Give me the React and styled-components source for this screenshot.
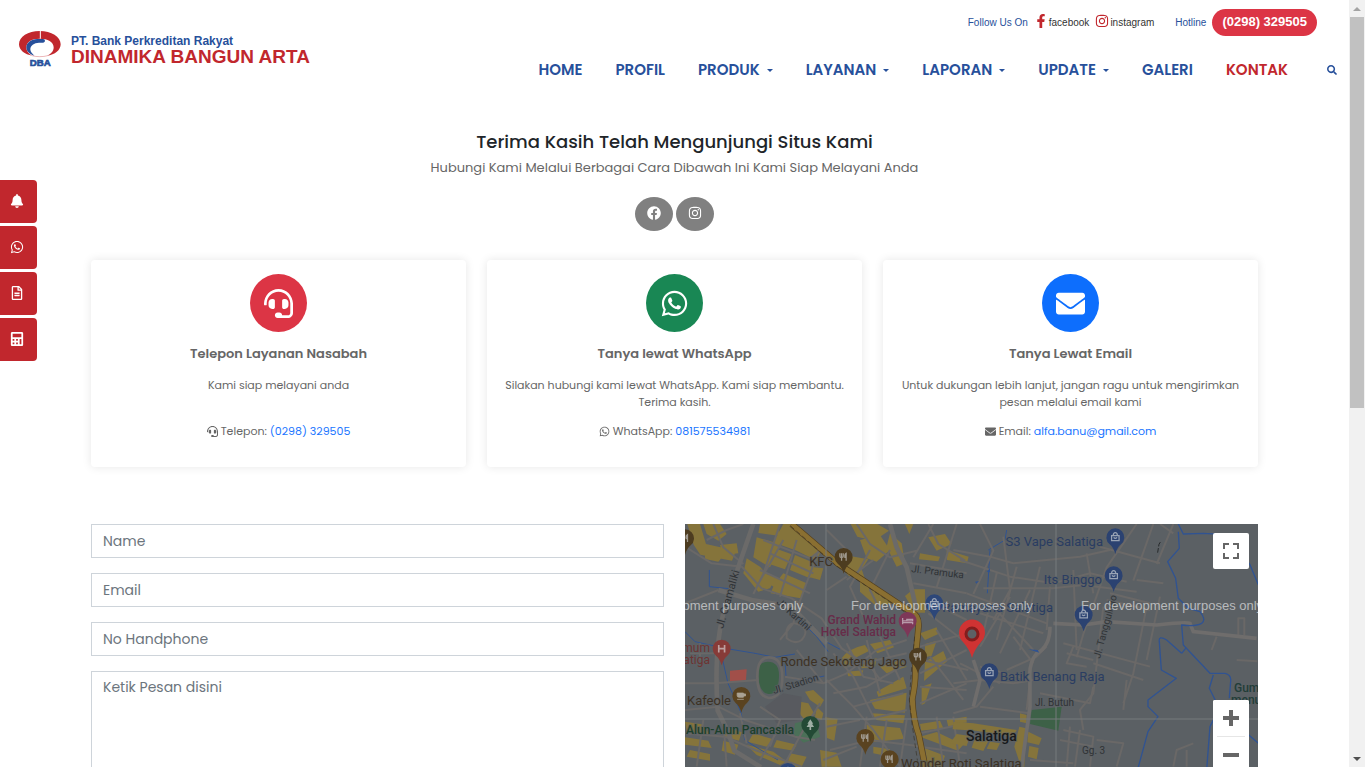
import React from "react";
import styled, { createGlobalStyle } from "styled-components";
import {
  FaBell,
  FaCalculator,
  FaEnvelope,
  FaFacebook,
  FaFacebookF,
  FaHeadset,
  FaInstagram,
  FaRegFileAlt,
  FaSearch,
  FaWhatsapp,
} from "react-icons/fa";

const GlobalStyle = createGlobalStyle`
  * { box-sizing: border-box; }
  body {
    margin: 0;
    background: #fff;
    color: #666;
    font-family: Poppins, Inter, "Open Sans", sans-serif;
    font-size: 11px;
  }
  a { text-decoration: none; color: inherit; }
  h1, h2, p { margin: 0; }
`;

const arial = `"Liberation Sans", Arial, sans-serif`;
const navy = "#27509b";
const red = "#c1272d";

const Shell = styled.div`
  display: flex;
  height: 100vh;
  overflow: hidden;
`;

const Page = styled.div`
  flex: 1;
  min-width: 0;
  overflow: hidden;
`;

const ScrollTrack = styled.div`
  display: flex;
  flex-direction: column;
  justify-content: space-between;
  align-items: center;
  width: 16px;
  background: #f1f1f1;
`;

const ScrollThumb = styled.div`
  flex: 0 0 51%;
  width: 14px;
  margin-bottom: auto;
  background: #c1c1c1;
`;

const ScrollArrow = styled.div`
  display: flex;
  align-items: center;
  justify-content: center;
  height: 17px;
  color: ${(p) => (p.$dark ? "#505050" : "#a3a3a3")};
`;

const Header = styled.header`
  display: flex;
  justify-content: space-between;
  padding: 9px 12px 0 18px;
  height: 100px;
`;

const Brand = styled.a`
  display: flex;
  align-items: flex-start;
  gap: 9px;
  padding-top: 21px;
`;

const BrandText = styled.span`
  display: flex;
  flex-direction: column;
  padding-top: 4px;
  font-family: ${arial};
  font-weight: bold;
`;

const BrandTop = styled.span`
  font-size: 12px;
  line-height: 14px;
  color: ${navy};
`;

const BrandName = styled.span`
  font-size: 19px;
  line-height: 18px;
  color: ${red};
`;

const HeaderRight = styled.div`
  display: flex;
  flex-direction: column;
`;

const TopBar = styled.div`
  display: flex;
  align-items: center;
  justify-content: flex-end;
  gap: 6px;
  padding-right: 20px;
  font: 10px ${arial};
  color: ${navy};
`;

const SocialLink = styled.a`
  display: flex;
  align-items: center;
  gap: 1px;
  color: #333;
  svg { color: ${red}; margin-top: -4px; }
`;

const HotlineLabel = styled.span`
  margin-left: 15px;
`;

const Pill = styled.a`
  padding: 0 10px 2px;
  border-radius: 14px;
  background: #dc3545;
  color: #fff;
  font: 700 13px/25px ${arial};
`;

const Nav = styled.nav`
  display: flex;
  align-items: center;
  gap: 33px;
  padding-top: 22px;
`;

const NavLink = styled.a`
  display: flex;
  align-items: center;
  gap: 7px;
  font-size: 15px;
  line-height: 24px;
  font-weight: 600;
  color: ${(p) => (p.$active ? red : navy)};
`;

const Caret = styled.span`
  border: 3px solid transparent;
  border-top-color: currentColor;
  border-bottom: 0;
`;

const SearchButton = styled.button`
  display: flex;
  margin-left: 6px;
  padding: 0;
  border: 0;
  background: none;
  color: ${navy};
`;

const Rail = styled.aside`
  position: fixed;
  left: 0;
  top: 180px;
  display: flex;
  flex-direction: column;
  gap: 3px;
`;

const RailLink = styled.a`
  display: flex;
  align-items: center;
  justify-content: center;
  width: 37px;
  height: 43px;
  padding: 0 3px 2px 0;
  border-radius: 0 4px 4px 0;
  background: ${red};
  color: #fff;
`;

const Container = styled.main`
  max-width: 1167px;
  margin: 0 auto;
`;

const Intro = styled.section`
  display: flex;
  flex-direction: column;
  align-items: center;
  padding-top: 30px;
  text-align: center;
`;

const Title = styled.h1`
  font-size: 18px;
  line-height: 24px;
  font-weight: 500;
  color: #212529;
`;

const Subtitle = styled.p`
  padding-top: 4px;
  font-size: 13px;
  line-height: 20px;
`;

const Socials = styled.div`
  display: flex;
  gap: 3px;
  padding: 19px 0 29px;
`;

const SocialButton = styled.a`
  display: flex;
  align-items: center;
  justify-content: center;
  height: 34px;
  padding: 0 12px 2px;
  border-radius: 50%;
  background: #808080;
  color: #fff;
`;

const Cards = styled.section`
  display: grid;
  grid-template-columns: repeat(3, 1fr);
  gap: 21px;
`;

const Card = styled.article`
  display: flex;
  flex-direction: column;
  align-items: center;
  min-height: 207px;
  padding: 14px 15px;
  border-radius: 4px;
  box-shadow: 0 0 10px rgba(0, 0, 0, 0.1);
  text-align: center;
  line-height: 17px;
`;

const CardIcon = styled.div`
  display: flex;
  align-items: center;
  justify-content: center;
  width: 57px;
  height: 58px;
  border-radius: 50%;
  background: ${(p) => p.$color};
  color: #fff;
`;

const CardTitle = styled.h2`
  padding: 12px 0 13px;
  font-size: 13px;
  line-height: 20px;
  font-weight: 600;
`;

const CardText = styled.p`
  min-height: 34px;
`;

const CardContact = styled.p`
  display: flex;
  align-items: center;
  gap: 3px;
  padding-top: 12px;
  a { color: #1a75ff; }
`;

const Columns = styled.section`
  display: grid;
  grid-template-columns: 1fr 1fr;
  gap: 21px;
  padding-top: 57px;
`;

const Form = styled.form`
  display: flex;
  flex-direction: column;
  gap: 15px;
`;

const Field = styled.input`
  width: 100%;
  height: 34px;
  padding: 0 11px;
  border: 1px solid #ced4da;
  border-radius: 0;
  background: #fff;
  font: 14px/22px Poppins, Inter, sans-serif;
  &::placeholder { color: #6c757d; opacity: 1; }
`;

const MessageField = styled(Field)`
  display: block;
  height: 140px;
  padding: 4px 11px;
  resize: none;
`;

const MapBox = styled.div`
  position: relative;
  height: 282px;
  overflow: hidden;
  background: #5b6064;
`;

const MapSvg = styled.svg`
  display: block;
  width: 100%;
  height: 100%;
`;

const MapButton = styled.button`
  display: flex;
  align-items: center;
  justify-content: center;
  width: 36px;
  height: 36px;
  padding: 0;
  border: 0;
  border-radius: 2px;
  background: #fff;
`;

const FullscreenSlot = styled.div`
  position: absolute;
  top: 9px;
  right: 9px;
`;

const ZoomSlot = styled.div`
  position: absolute;
  top: 176px;
  right: 9px;
  border-radius: 2px;
  background: #fff;
`;

const ZoomRule = styled.div`
  height: 1px;
  margin: 0 4px;
  background: #e6e6e6;
`;

function Logo() {
  return (
    <svg width="44" height="38" viewBox="0 0 132 114" aria-hidden="true">
      <path fillRule="evenodd" fill={red} d="M65 3C30 3 3 20 3 43c0 17 17 31 40 34-10-5-18-13-18-25 0-17 16-26 40-26s42 9 42 26c0 12-8 20-20 25 24-2 41-17 41-34C128 20 100 3 65 3z" />
      <path d="M67 0v26" stroke="#fff" strokeWidth="3" />
      <path fill={navy} d="M75 27H58c-18 0-33 11-33 25 0 11 9 21 24 25-7-6-12-12-12-19 0-12 11-19 26-20h12c8 0 8-11 0-11z" />
      <path d="M42 77c12 4 34 4 47 0" fill="none" stroke={red} strokeWidth="1" />
      <text x="67" y="109" textAnchor="middle" fontFamily="Liberation Sans, Arial, sans-serif" fontWeight="bold" fontSize="29" fill={navy} stroke={navy} strokeWidth="2">DBA</text>
    </svg>
  );
}

const glyphs = {
  food: <path d="M-9-9v7q0 3 4 3V9M-5-9v10M-1-9v7q0 3-4 3M6 9V-9q-4 2-3 10h3" fill="none" stroke="#a09a90" strokeWidth="3" />,
  bag: <path d="M-9-4H9V8H-9zM-5-4q0-7 5-7t5 7M-4 0q4 5 8 0" fill="none" stroke="#98a3b5" strokeWidth="3" />,
  bed: <path d="M-12-7V8M-12 4H12V8M-12 0H12V-4H-2V0" fill="none" stroke="#b89aaa" strokeWidth="3" />,
  cup: <path d="M-10-7H5V3H-6q-4 0-4-4zM5-5h5v5H5M-10 8H6" fill="#aaa293" stroke="#aaa293" strokeWidth="2" />,
  tree: <path d="M0-14-7-3h3l-5 8H-2v7h4V5h7L4-3h3z" fill="#9fb0a5" />,
  hosp: <path d="M-7-9V9M7-9V9M-7 0H7" stroke="#bda09f" strokeWidth="4" />,
};

function Pin({ x, y, color, kind }) {
  return (
    <g transform={`translate(${x} ${y})`}>
      <path d="M0 50Q-5 31-17 21A27 27 0 1 1 17 21Q5 31 0 50Z" fill={color} />
      <g transform="scale(1.25)">{glyphs[kind]}</g>
    </g>
  );
}

function CityMap() {
  return (
    <MapSvg viewBox="0 0 573 282" preserveAspectRatio="xMinYMin slice" role="img" aria-label="Peta Salatiga">
      <rect width="573" height="282" fill="#5b6064" />
      <g transform="translate(-5 -4) scale(0.3333)">
        <g fill="#85743b">
          <path d="M22 12h38l18 60 90 20-12 30-95-18-20-30zM70 12h50l20 30-25 20-35-20zM120 75l50-5 5 30-45 5zM75 105l50 8-10 12-40-8z" />
          <path d="M240 12h60l-5 35-60-8zM310 12h25l90 75-15 35-60-30-70-25zM230 52l70 20-30 70-50-30zM285 85l50 18-20 45-45-15zM345 105l60 25-15 45-60-25zM200 115l40 25 40 45-10 20-35 10-45-55zM255 160l50 20-10 30-30-20zM310 160l70 30-18 45-90-15 10-25zM390 140l40 5-10 35-30-8z" />
          <path d="M512 12h80l35 20-45 30-50-12zM540 60l60-15 30 45-40 35-30-10zM630 40l35 30 10 60-25 10-30-60zM470 130l40-22 55 10-20 30 12 35-50-15zM540 165l50 45 55 40-60 5-45-40zM700 208h35v70h-30l-30-50zM675 12h25l-12 30zM720 100l60 10-5 14-58-6zM745 52l50-10 20 30-45 20zM800 90l66 20-5 20-60-10z" />
          <path d="M485 415q20-30 70-40l12 18-60 30 10 15-25 5zM570 372l60-12 12 22-50 18zM500 455l50-4-5 16-40 2zM600 440l60-20 20 20-60 20zM540 425l50-10-5 25-40 5zM590 515l80-45 10 35-85 25zM570 540l110-22-5 60-90-12zM575 580l100 6-5 24-80-10zM720 340l50-18 5 20-40 18zM735 372l35-10-15 45-20 5zM735 425l55-32 12 30-70 60zM725 500l30-10-20 60-10 5z" />
          <path d="M560 614l100 10 12 32-90 10-20-20zM720 612l60-10 10 22-66 8zM800 600l60-10v18l-55 12zM720 650l50-14 80 38-16 18zM735 685l60 22-10 33h-40zM375 515l25-5 32 30-12 20-30-20zM360 545l25 5 20 35-35 10-15-20zM410 560l20 20-5 20-20-8zM435 592l38 5-10 65-22-8zM580 680l50 8-10 20-40-8z" />
          <path d="M15 605l50 8 25 30-70-8zM15 652l70 10 10 22-80-10zM30 690l60 12v20l-70-12zM140 622l45 15-8 25-45-12zM130 662l45 12-10 30-40-12zM220 640l60 18-20 22-55-14zM290 660l60 14-10 18-60-10zM200 675l80 20 40 30-20 10-70-30zM330 700l50 10-15 30h-45zM420 690l50 8 15 42h-60z" />
        </g>
        <path d="M310 520l55 10-5 70-70 10-35-50z" fill="#585a5f" />
        <path d="M150 452l50-4-2 34-48 3z" fill="#a14f49" />
        <path d="M235 455q0-28 28-30 36 0 34 45-2 55-32 52-32-5-30-67z" fill="#3d6147" />
        <path d="M345 610l60-15 16 55-50 18-30-25z" fill="#4b7058" />
        <g fill="none" stroke="#305392" strokeWidth="3">
          <path d="M15 335l30 30 90 20 90 15 60 12 60-10M350 290l60 60 35 45M130 400l-2 20 16 70 40 90 10 80 40 25 60 35M315 420l3 50 50 12 65-14M88 150v50l60 6M410 350l70 38" />
        </g>
        <g fill="none" stroke="#6a6867" strokeWidth="6" strokeLinejoin="round">
          <path d="M15 80l80 50 90 10 60 65 90 30 90 60 60 90 90 60 30 40M100 12l30 70 60 50M80 60l60-30 50-18M250 60l140 55 40-30M270 100l130 60M240 150l150 70M300 12l-50 150-30 60M350 60l-50 170M420 80l-70 190M230 200l80-140M15 250l100-40" />
          <path d="M440 30l60 60M530 12l40 60 60 40 80-20M570 90l-60 110 40 90M630 90l-60 120 30 60M500 180l80-60M440 210l60-40M745 12l30 60 80 50M690 130l170 30M760 12l-60 100M830 12l-60 190M700 190l160 30M740 240l120 60M745 280l115 90" />
          <path d="M15 490h90l130-10M315 470l115 20 70-30 90-70 90-30M460 400l60 70 60 120M500 370l50 100 90 20M560 360l40 160M600 350l60 130M500 440l180-40M460 520l100-20 120-70M520 560l150-40M560 600l120-30M440 480l80 80 60 70 80 110M720 380l140-40M725 420l140 30M720 460l140-70M720 500l140 10M720 550l140-60M770 330l90 150M750 410l100 130" />
          <path d="M15 570l100-10 80 40 150 50 60 10M15 640l120 10 90 40 140 50M70 600l-20 140M130 600l10 140M180 580l20 90M240 560l60 40-30 80M300 620l-60 100M420 550l-50 80-60 110M440 620l100-20M450 690l120-30 160 20M560 590l-20 150M620 600l-20 140M680 600l-20 140M720 640l140-30M720 680l140 20M770 590l20 150M820 590l20 150M430 720l100-40M300 360l40-50 20-70M320 330q10-30 40-15t5 45q-20 15-45-5zM30 400h80M60 370v50M350 390l80 100" />
        </g>
        <path d="M232 470q0-58 35-58 40 0 40 60 0 62-40 62-35-5-35-64z" fill="none" stroke="#6a6867" strokeWidth="8" />
        <path d="M220 12q-60 170-85 250-35 120-22 310l30 60 20 60 80 50M630 12l20 70 30 60 30 130M115 210l100 30 120 20 105 110" fill="none" stroke="#6b6a69" strokeWidth="14" />
        <path d="M335 12l140 120 220 145q25 10 20 50l-10 100q5 50-8 110 2 60 20 110l30 150" fill="none" stroke="#54401f" strokeWidth="19" />
        <path d="M335 12l140 120 220 145q25 10 20 50l-10 100q5 50-8 110 2 60 20 110l30 150" fill="none" stroke="#8a6f31" strokeWidth="15" />
        <path d="M332 18l135 118 210 142M704 350l-8 80-8 110 8 70 22 150" fill="none" stroke="#3a3327" strokeWidth="2" strokeDasharray="14 9" />
      </g>
      <g transform="translate(275 -4) scale(0.3333)">
        <g fill="#85743b">
          <path d="M-20 605l60 5 130 20-12 20-110-18-70-4zM-10 642l40 6-10 30-50-8zM45 655l40 8-15 30-35-10zM90 665l30 5-10 20-30-4zM180 580l20 5v25l-20-5zM178 620l20 5-5 115h-10l-20-60zM205 635l40 20-8 20-35-8zM208 678l28 6-6 34-26-8z" />
        </g>
        <path d="M215 570l90-10-10 72-85-20z" fill="#3d6147" />
        <path d="M85 90l50-30 5-30M90 90l-8 130" fill="none" stroke="#305392" strokeWidth="3" />
        <g fill="none" stroke="#6a6867" strokeWidth="6" strokeLinejoin="round">
          <path d="M-20 90l110 20 70 20 200-20 90-20M60 12l40 80-60 130M130 50l20 160-50 90M0 120l150 50 130 20 110-30 110 25M70 205h210l90-10 160 20M110 160l-40 180M170 140l-60 220M20 220l240 90M60 280l190 60M90 250l130 140M150 230l-90 150M210 210l-90 190M240 140l-60 250M270 200l-10 130" />
          <path d="M340 150l10 240M380 100l20 120M530 12l-90 130-70 200-20 70M580 12l-60 170M640 12l-50 120M640 40l-40-28M420 80l180 50M450 220l120 30M440 240l130 30M310 370l260 70M400 430l150 50M430 260l-30 260-40 50 10 60M560 260l-40 200-30 90M600 230l-40 190M380 440l-60-10 20-50M320 400l80 20M500 480l-10 90" />
          <path d="M-20 490l80-10 100 10 60-10M0 430l120 60M60 440l150 40-10 90M160 350l60 80M140 450l90-40 30-30M100 500l-50 60-70 20M60 560l150 20M240 520l150 30 10-50M310 630l90 20-10 90M300 660l100 20M330 620l-10 120M360 630l-15 110M410 660l80 10-20 70M210 720l130 10M640 740l10-50 50-20M680 690v50" />
          <path d="M835 345v-50h18v50M770 350l-15 40M830 420l62 4M530 180l80 10" />
        </g>
        <path d="M280 310l90 5 70-10 150 10q90-10 100-5l10 25 190 20M270 320q0 60-40 80-25 30-20 80v80l-25 180M40 420l20 60-20 80" fill="none" stroke="#6f6d6c" strokeWidth="11" />
        <path d="M593 98l4-25 6-10" fill="none" stroke="#25282a" strokeWidth="3" strokeDasharray="14 5" />
        <g fill="none" stroke="#305392" strokeWidth="4" strokeLinejoin="round">
          <path d="M655 12l15 30 60-2 70 4 70 90 25 60M655 35l3 50-35 40 24 50 8 60 30 30 35 10q20 25 5 35-18 10-60 5l5 60 80 85h45q20 4 17 25l-4 50M665 400l-45-40q-25-15-22 5l6 85 45 25-85 65v20l30 30-30 45-30 110M665 400l12-15M760 465l-12 40 30 60M780 560l-30 60-10 130M860 640l60 50" />
        </g>
        <path d="M45 185l12-2-8 8zM80 155l10-10v12zM205 388l28 2 5 8z" fill="#305392" />
      </g>

      <path d="M141 0v282M371 0v282M0 195h573" stroke="#777a7d" strokeWidth="1" fill="none" />

      <g transform="translate(-5 -4) scale(0.3333)">
        <Pin x={15} y={55} color="#4d3c20" kind="food" />
        <Pin x={491} y={111} color="#4d3c20" kind="food" />
        <Pin x={683} y={303} color="#7e3758" kind="bed" />
        <Pin x={763} y={250} color="#2d4779" kind="bag" />
        <Pin x={714} y={410} color="#4d3c20" kind="food" />
        <Pin x={125} y={386} color="#873b38" kind="hosp" />
        <Pin x={184} y={528} color="#5a4320" kind="cup" />
        <Pin x={391} y={615} color="#234a35" kind="tree" />
        <Pin x={556} y={654} color="#5a4320" kind="food" />
        <Pin x={629} y={718} color="#5a4320" kind="food" />
        <Pin x={324} y={756} color="#2d4779" kind="bag" />
      </g>
      <g transform="translate(275 -4) scale(0.3333)">
        <Pin x={466} y={52} color="#2b4271" kind="bag" />
        <Pin x={461} y={166} color="#2b4271" kind="bag" />
        <Pin x={371} y={284} color="#2b4271" kind="bag" />
        <Pin x={88} y={457} color="#2b4271" kind="bag" />
      </g>

      <g fontFamily="Roboto, sans-serif" fontSize="13" stroke="#5b6064" strokeWidth="2" strokeOpacity="0.6" paintOrder="stroke" strokeLinejoin="round">
        <g fill="#3d3224">
          <text x="148" y="42" textAnchor="end">KFC</text>
          <text x="222" y="142" textAnchor="end">Ronde Sekoteng Jago</text>
          <text x="2" y="181">Kafeole</text>
          <text x="216" y="244">Wonder Roti Salatiga</text>
        </g>
        <g fill="#672c49" fontWeight="500" fontSize="12" textAnchor="end">
          <text x="211" y="100">Grand Wahid</text>
          <text x="211" y="112">Hotel Salatiga</text>
        </g>
        <g fill="#6d3432" fontSize="12" textAnchor="end">
          <text x="25" y="128">umum</text>
          <text x="25" y="140">Salatiga</text>
        </g>
        <text x="1" y="210" fill="#1c3f2c" fontWeight="500" fontSize="12">Alun-Alun Pancasila</text>
        <g fill="#2a3d62">
          <text x="418" y="22" textAnchor="end">S3 Vape Salatiga</text>
          <text x="417" y="60" textAnchor="end">Its Binggo</text>
          <text x="368" y="88" textAnchor="end">Ramayana Salatiga</text>
          <text x="315" y="157">Batik Benang Raja</text>
        </g>
        <g fill="#223d38" fontWeight="500" fontSize="12">
          <text x="549" y="168">Gumuk</text>
          <text x="546" y="180">menur</text>
        </g>
        <text x="281" y="217" fill="#17191b" fontWeight="500" fontSize="14">Salatiga</text>
        <g fill="#303336" fontSize="10">
          <text transform="translate(38 105) rotate(-74)" fontSize="11">Jl. Cramaliki</text>
          <text transform="translate(91 79) rotate(42)">Jl. Kartini</text>
          <text transform="translate(226 48) rotate(7)">Jl. Pramuka</text>
          <text transform="translate(89 170) rotate(-17)">Jl. Stadion</text>
          <text transform="translate(415 135) rotate(-75)">Jl. Tanggulrejo</text>
          <text x="350" y="182">Jl. Butuh</text>
          <text x="397" y="230">Gg. 3</text>
        </g>
      </g>

      <g fontFamily="Liberation Sans, Arial, sans-serif" fontSize="13" fill="#fff" fillOpacity="0.58">
        <text x="-64" y="86">For development purposes only</text>
        <text x="166" y="86">For development purposes only</text>
        <text x="396" y="86">For development purposes only</text>
      </g>

      <g transform="translate(287 110)">
        <path d="M0 24Q-2 16-9 8A13 13 0 1 1 9 8Q2 16 0 24Z" fill="#cf3333" />
        <circle r="6" fill="#5d6165" stroke="#831d1d" strokeWidth="3" />
      </g>
    </MapSvg>
  );
}

const menu = [
  { label: "HOME" },
  { label: "PROFIL" },
  { label: "PRODUK", sub: true },
  { label: "LAYANAN", sub: true },
  { label: "LAPORAN", sub: true },
  { label: "UPDATE", sub: true },
  { label: "GALERI" },
  { label: "KONTAK", active: true },
];

const rail = [
  { label: "Pengumuman", Icon: FaBell },
  { label: "WhatsApp", Icon: FaWhatsapp },
  { label: "Formulir", Icon: FaRegFileAlt },
  { label: "Kalkulator", Icon: FaCalculator },
];

const cards = [
  {
    title: "Telepon Layanan Nasabah",
    text: "Kami siap melayani anda",
    label: "Telepon:",
    value: "(0298) 329505",
    href: "tel:0298329505",
    color: "#dc3545",
    Icon: FaHeadset,
  },
  {
    title: "Tanya lewat WhatsApp",
    text: "Silakan hubungi kami lewat WhatsApp. Kami siap membantu. Terima kasih.",
    label: "WhatsApp:",
    value: "081575534981",
    href: "https://wa.me/6281575534981",
    color: "#198754",
    Icon: FaWhatsapp,
  },
  {
    title: "Tanya Lewat Email",
    text: "Untuk dukungan lebih lanjut, jangan ragu untuk mengirimkan pesan melalui email kami",
    label: "Email:",
    value: "alfa.banu@gmail.com",
    href: "mailto:alfa.banu@gmail.com",
    color: "#0d6efd",
    Icon: FaEnvelope,
  },
];

export default function App() {
  return (
    <Shell>
      <GlobalStyle />
      <Page>
        <Header>
          <Brand href="#">
            <Logo />
            <BrandText>
              <BrandTop>PT. Bank Perkreditan Rakyat</BrandTop>
              <BrandName>DINAMIKA BANGUN ARTA</BrandName>
            </BrandText>
          </Brand>
          <HeaderRight>
            <TopBar>
              <span>Follow Us On</span>
              <SocialLink href="#"><FaFacebookF size={14} />facebook</SocialLink>
              <SocialLink href="#"><FaInstagram size={14} />instagram</SocialLink>
              <HotlineLabel>Hotline</HotlineLabel>
              <Pill href="tel:0298329505">(0298) 329505</Pill>
            </TopBar>
            <Nav>
              {menu.map((m) => (
                <NavLink key={m.label} href="#" $active={m.active}>
                  {m.label}
                  {m.sub && <Caret />}
                </NavLink>
              ))}
              <SearchButton type="button" aria-label="Cari"><FaSearch size={10} /></SearchButton>
            </Nav>
          </HeaderRight>
        </Header>

        <Container>
          <Intro>
            <Title>Terima Kasih Telah Mengunjungi Situs Kami</Title>
            <Subtitle>Hubungi Kami Melalui Berbagai Cara Dibawah Ini Kami Siap Melayani Anda</Subtitle>
            <Socials>
              <SocialButton href="#" aria-label="Facebook"><FaFacebook size={14} /></SocialButton>
              <SocialButton href="#" aria-label="Instagram"><FaInstagram size={14} /></SocialButton>
            </Socials>
          </Intro>

          <Cards>
            {cards.map(({ title, text, label, value, href, color, Icon }) => (
              <Card key={title}>
                <CardIcon $color={color}><Icon size={29} /></CardIcon>
                <CardTitle>{title}</CardTitle>
                <CardText>{text}</CardText>
                <CardContact>
                  <Icon size={11} />
                  <span>{label}</span>
                  <a href={href}>{value}</a>
                </CardContact>
              </Card>
            ))}
          </Cards>

          <Columns>
            <Form>
              <Field type="text" placeholder="Name" aria-label="Name" />
              <Field type="email" placeholder="Email" aria-label="Email" />
              <Field type="tel" placeholder="No Handphone" aria-label="No Handphone" />
              <MessageField as="textarea" placeholder="Ketik Pesan disini" aria-label="Ketik Pesan disini" />
            </Form>
            <MapBox>
              <CityMap />
              <FullscreenSlot>
                <MapButton type="button" aria-label="Layar penuh">
                  <svg width="16" height="16" viewBox="0 0 16 16" fill="none" stroke="#666" strokeWidth="2">
                    <path d="M1 6V1h5M10 1h5v5M15 10v5h-5M6 15H1v-5" />
                  </svg>
                </MapButton>
              </FullscreenSlot>
              <ZoomSlot>
                <MapButton type="button" aria-label="Perbesar">
                  <svg width="16" height="16" viewBox="0 0 16 16" stroke="#666" strokeWidth="4"><path d="M8 0v16M0 8h16" /></svg>
                </MapButton>
                <ZoomRule />
                <MapButton type="button" aria-label="Perkecil">
                  <svg width="16" height="16" viewBox="0 0 16 16" stroke="#666" strokeWidth="4"><path d="M0 8h16" /></svg>
                </MapButton>
              </ZoomSlot>
            </MapBox>
          </Columns>
        </Container>

        <Rail>
          {rail.map(({ label, Icon }) => (
            <RailLink key={label} href="#" aria-label={label}><Icon size={14} /></RailLink>
          ))}
        </Rail>
      </Page>
      <ScrollTrack aria-hidden="true">
        <ScrollArrow><svg width="8" height="4"><path d="M0 4l4-4 4 4z" fill="currentColor" /></svg></ScrollArrow>
        <ScrollThumb />
        <ScrollArrow $dark><svg width="8" height="4"><path d="M0 0l4 4 4-4z" fill="currentColor" /></svg></ScrollArrow>
      </ScrollTrack>
    </Shell>
  );
}
